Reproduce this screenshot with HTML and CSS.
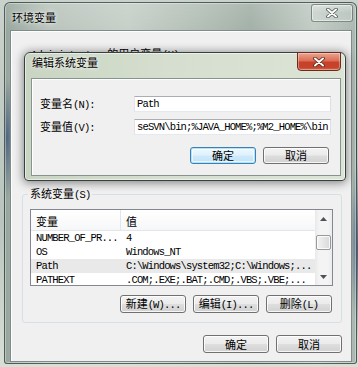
FILE: index.html
```html
<!DOCTYPE html>
<html lang="zh-CN">
<head>
<meta charset="utf-8">
<title>环境变量</title>
<link rel="stylesheet" href="styles.css">
</head>
<body>
<div class="win">
  <div class="titlebar">
    <span class="title">环境变量</span>
    <div class="cap-close">
      <svg width="12" height="10" viewBox="0 0 12 10"><path d="M2 1.5L10 8.5M10 1.5L2 8.5" stroke="#4a5552" stroke-width="3.6" stroke-linecap="round"/><path d="M2 1.5L10 8.5M10 1.5L2 8.5" stroke="#fff" stroke-width="2" stroke-linecap="round"/></svg>
    </div>
  </div>
  <div class="client">
    <div class="ugroup"><span class="m">Administrator </span>的用户变量<span class="m">(U)</span></div>
    <fieldset class="sgroup">
      <legend>系统变量<span class="m">(S)</span></legend>
      <div class="list">
        <div class="lmain">
          <div class="lhead"><div class="hc c1">变量</div><div class="hc c2">值</div></div>
          <div class="rows">
            <div class="row"><div class="c1 m">NUMBER_OF_PR...</div><div class="c2 m">4</div></div>
            <div class="row"><div class="c1 m">OS</div><div class="c2 m">Windows_NT</div></div>
            <div class="row sel"><div class="c1 m">Path</div><div class="c2 m">C:\Windows\system32;C:\Windows;...</div></div>
            <div class="row"><div class="c1 m">PATHEXT</div><div class="c2 m">.COM;.EXE;.BAT;.CMD;.VBS;.VBE;...</div></div>
          </div>
        </div>
        <div class="vscroll">
          <div class="sb-btn"><svg width="7" height="4" viewBox="0 0 7 4"><path d="M0 4L3.5 0L7 4Z" fill="#4d5157"/></svg></div>
          <div class="thumb"></div>
          <div class="sb-fill"></div>
          <div class="sb-btn"><svg width="7" height="4" viewBox="0 0 7 4"><path d="M0 0L3.5 4L7 0Z" fill="#4d5157"/></svg></div>
        </div>
      </div>
      <div class="btnrow">
        <button class="btn">新建<span class="m">(W)...</span></button>
        <button class="btn">编辑<span class="m">(I)...</span></button>
        <button class="btn">删除<span class="m">(L)</span></button>
      </div>
    </fieldset>
    <div class="btnrow bottom">
      <button class="btn">确定</button>
      <button class="btn">取消</button>
    </div>
  </div>
</div>

<div class="dlg">
  <div class="dlg-title">
    <span class="title">编辑系统变量</span>
    <div class="close-red">
      <svg width="12" height="10" viewBox="0 0 12 10"><path d="M2 1.5L10 8.5M10 1.5L2 8.5" stroke="#5a2418" stroke-width="3.6" stroke-linecap="round"/><path d="M2 1.5L10 8.5M10 1.5L2 8.5" stroke="#fff" stroke-width="2" stroke-linecap="round"/></svg>
    </div>
  </div>
  <div class="dlg-client">
    <div class="form">
      <div class="lbl">变量名<span class="m">(N):</span></div>
      <div class="field m">Path</div>
      <div class="lbl">变量值<span class="m">(V):</span></div>
      <div class="field m">seSVN\bin;%JAVA_HOME%;%M2_HOME%\bin</div>
    </div>
    <div class="dlg-btns">
      <button class="btn default">确定</button>
      <button class="btn">取消</button>
    </div>
  </div>
</div>
</body>
</html>
```

FILE: styles.css
```css
* { box-sizing: border-box; }
html, body { margin: 0; padding: 0; }
body {
  width: 358px;
  height: 367px;
  overflow: hidden;
  position: relative;
  font-family: "Noto Sans CJK SC", "Noto Sans", sans-serif;
  font-size: 11px;
  line-height: 14px;
  color: #000;
  background:
    radial-gradient(ellipse 8px 90px at 358px 250px, rgba(40, 62, 110, .8), transparent),
    linear-gradient(180deg, #c9d2cb 0%, #b9c5bd 60%, #d8e0d6 100%);
}
.m {
  font-family: "Liberation Mono", monospace;
  font-size: 10.5px;
  letter-spacing: -0.85px;
}

/* outer window */
.win {
  margin: 2px 0 0 4px;
  width: 353px;
  height: 362px;
  border: 1px solid rgba(50, 60, 60, .75);
  border-radius: 6px 6px 3px 3px;
  padding: 0 4px 1px 5px;
  display: flex;
  flex-direction: column;
  background-color: #b5c1b9;
  background-image:
    radial-gradient(ellipse 10px 60px at 2px 135px, rgba(50, 75, 115, .7), transparent),
    radial-gradient(ellipse 8px 80px at 352px 240px, rgba(50, 70, 110, .6), transparent),
    linear-gradient(180deg, rgba(255, 255, 255, .12), rgba(255, 255, 255, 0) 30px),
    linear-gradient(90deg, #97a69d 0%, #b9c4bc 12%, #c6cfc8 35%, #b3bfb6 55%, #a2b0a7 70%, #c2ccc5 88%, #aab7b0 100%);
  box-shadow: inset 0 0 0 1px rgba(255, 255, 255, .35);
}
.titlebar {
  flex: none;
  height: 27px;
  display: flex;
  justify-content: space-between;
  align-items: flex-start;
}
.title {
  margin: 7px 0 0 2px;
  text-shadow: 0 0 5px rgba(255, 255, 255, .9), 0 0 2px rgba(255, 255, 255, .8);
}
.cap-close {
  width: 42px;
  height: 18px;
  margin: 1px -1px 0 0;
  display: flex;
  align-items: center;
  justify-content: center;
  border: 1px solid rgba(70, 82, 80, .6);
  border-radius: 3px;
  background: linear-gradient(rgba(255, 255, 255, .4), rgba(255, 255, 255, .12) 50%, rgba(255, 255, 255, .2));
  box-shadow: inset 0 0 0 1px rgba(255, 255, 255, .45);
}
.client {
  flex: 1;
  background: #f0f0f0;
  border: 1px solid #7f8c8a;
  box-shadow: inset 1px 1px 0 #fff;
}
.ugroup {
  margin-top: 15px;
  height: 140px;
  padding-left: 20px;
  white-space: nowrap;
}

/* system variables group */
.sgroup {
  margin: 0 9px 0 11px;
  padding: 7px 0 9px 0;
  border: 1px solid #d5dfe5;
  border-radius: 3px;
  min-width: 0;
}
.sgroup legend {
  margin-left: 5px;
  padding: 0 2px;
  line-height: 14px;
}
.list {
  margin: 0 8px 0 7px;
  height: 77px;
  border: 1px solid #828790;
  background: #fff;
  display: flex;
}
.lmain {
  flex: 1;
  min-width: 0;
  display: flex;
  flex-direction: column;
}
.lhead {
  flex: none;
  height: 21px;
  display: flex;
  background: linear-gradient(#fff, #f6f7f8);
  border-bottom: 1px solid #e3e5e8;
}
.hc {
  padding-top: 2px;
  line-height: 18px;
}
.c1 {
  flex: none;
  width: 90px;
  padding-left: 5px;
  white-space: nowrap;
  overflow: hidden;
}
.lhead .c1 { border-right: 1px solid #e3e5e8; }
.c2 {
  flex: 1;
  padding-left: 5px;
  white-space: nowrap;
  overflow: hidden;
}
.rows {
  flex: 1;
  overflow: hidden;
}
.row {
  display: flex;
  height: 14px;
  line-height: 15px;
}
.row.sel { background: #e9e9e9; }

.vscroll {
  flex: none;
  width: 17px;
  display: flex;
  flex-direction: column;
  background: linear-gradient(90deg, #e9e9e9, #f4f4f4 25%, #f4f4f4 75%, #ececec);
}
.sb-btn {
  height: 17px;
  flex: none;
  display: flex;
  align-items: center;
  justify-content: center;
}
.thumb {
  flex: none;
  margin: 8px 1px 0 1px;
  height: 15px;
  border: 1px solid #9a9a9a;
  border-radius: 2px;
  background: linear-gradient(90deg, #f4f4f4, #e6e6e6 50%, #d9d9d9);
  box-shadow: inset 0 0 0 1px rgba(255, 255, 255, .8);
}
.sb-fill { flex: 1; }

/* buttons */
.btnrow {
  display: flex;
  justify-content: flex-end;
  gap: 7px;
  margin-top: 9px;
  padding-right: 9px;
}
.btnrow.bottom { margin-top: 12px; }
.btn {
  width: 66px;
  height: 18px;
  padding: 0;
  border: 1px solid #707070;
  border-radius: 3px;
  background: linear-gradient(#f3f3f3 0%, #ebebeb 48%, #dedede 52%, #d1d1d1 100%);
  box-shadow: inset 0 0 0 1px rgba(255, 255, 255, .8);
  font-family: "Noto Sans CJK SC", sans-serif;
  font-size: 11px;
  line-height: 14px;
  color: #000;
  white-space: nowrap;
}
.btn.default {
  border-color: #3c7fb1;
  background: linear-gradient(#eef8fe 0%, #e0f2fc 48%, #cdeafb 52%, #bfe3f8 100%);
  box-shadow: inset 0 0 0 1px #b4e2fb, inset 0 0 0 2px rgba(255, 255, 255, .6);
}

/* edit dialog */
.dlg {
  position: absolute;
  left: 24px;
  top: 52px;
  width: 322px;
  height: 129px;
  border: 1px solid #364040;
  border-radius: 6px 6px 4px 4px;
  padding: 0 4px 4px 6px;
  display: flex;
  flex-direction: column;
  background: linear-gradient(90deg, #c9d4c2 0%, #d6dfcf 45%, #dbe4d5 100%);
  box-shadow: 0 1px 10px 1px rgba(0, 0, 0, .45), inset 0 0 0 1px rgba(255, 255, 255, .55);
}
.dlg-title {
  flex: none;
  height: 25px;
  display: flex;
  justify-content: space-between;
  align-items: flex-start;
}
.dlg-title .title { margin: 2px 0 0 1px; }
.close-red {
  width: 44px;
  height: 19px;
  margin-top: -1px;
  display: flex;
  align-items: center;
  justify-content: center;
  border: 1px solid #6a2a1c;
  border-radius: 0 0 4px 4px;
  background: linear-gradient(#e9a591 0%, #dc6e55 45%, #c8402a 55%, #c4442c 85%, #d86b4f 100%);
  box-shadow: inset 0 0 0 1px rgba(255, 255, 255, .35);
}
.dlg-client {
  flex: 1;
  background: #f0f0f0;
  border: 1px solid #86938f;
  box-shadow: inset 1px 1px 0 #fff;
}
.form {
  display: grid;
  grid-template-columns: 94px 1fr;
  row-gap: 7px;
  align-items: center;
  padding: 17px 9px 0 8px;
}
.lbl { white-space: nowrap; }
.field {
  height: 16px;
  border: 1px solid;
  border-color: #abadb3 #dbdfe6 #e3e9ef #e2e3ea;
  background: #fff;
  padding: 0 2px;
  line-height: 14px;
  white-space: nowrap;
  overflow: hidden;
}
.dlg-btns {
  display: flex;
  justify-content: flex-end;
  gap: 7px;
  margin-top: 12px;
  padding-right: 11px;
}
.dlg-btns .btn { height: 17px; line-height: 13px; }
```
